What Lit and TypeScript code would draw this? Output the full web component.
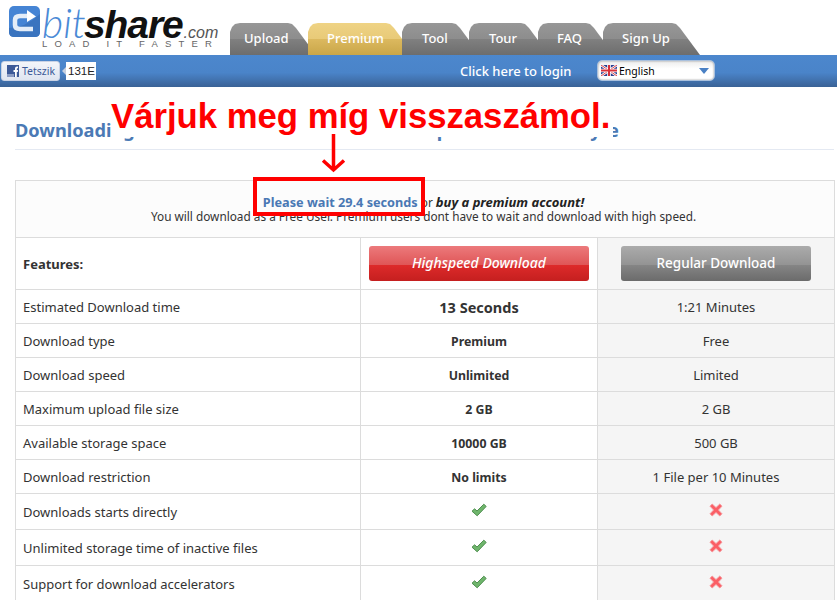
import { LitElement, html, css } from "lit";
import { customElement } from "lit/decorators.js";

const rows: [string, string, string, boolean?][] = [
  ["Estimated Download time", "13 Seconds", "1:21 Minutes", true],
  ["Download type", "Premium", "Free"],
  ["Download speed", "Unlimited", "Limited"],
  ["Maximum upload file size", "2 GB", "2 GB"],
  ["Available storage space", "10000 GB", "500 GB"],
  ["Download restriction", "No limits", "1 File per 10 Minutes"],
];
const ticks = ["Downloads starts directly", "Unlimited storage time of inactive files", "Support for download accelerators"];
const tabs: [string, number, number, number, boolean?][] = [
  ["Upload", 86, 14, -8],
  ["Premium", 106, 19, -12, true],
  ["Tool", 78, 20, -11],
  ["Tour", 80, 20, -11],
  ["FAQ", 76, 19, -11],
  ["Sign Up", 97, 19, 0],
];

const check = html`<svg class="ico" width="16" height="14" viewBox="0 0 16 14"><path d="M1 8.2 L3.6 5.8 L6 8 L12.8 1.2 L15.2 3.4 L6.2 12.8 Z" fill="#6fb56c" stroke="#4f8f50" stroke-width="1"/></svg>`;
const cross = html`<svg class="ico" width="14" height="14" viewBox="0 0 14 14"><path d="M3.2 1 L7 4.6 L10.8 1 L13 3.2 L9.4 7 L13 10.8 L10.8 13 L7 9.4 L3.2 13 L1 10.8 L4.6 7 L1 3.2 Z" fill="#fb5f66" stroke="#f59a9e" stroke-width="1"/></svg>`;

@customElement("app-root")
export class AppRoot extends LitElement {
  static styles = css`
    :host { display: block; position: relative; width: 837px; height: 600px; overflow: hidden; background: #fff; font-family: "Noto Sans", sans-serif; color: #333; }
    .top { display: flex; height: 55px; }
    .logo { width: 230px; flex: none; padding: 6px 0 0 9px; box-sizing: border-box; display: flex; gap: 2px; }
    .mark { flex: none; }
    .brand { display: flex; flex-direction: column; }
    .word { display: flex; align-items: baseline; height: 33px; line-height: 33px; white-space: nowrap; }
    .bit { font: italic 300 41px/33px Lato, sans-serif; color: #4a8ad6; width: 42px; }
    .share { font: italic 700 39px/33px "Liberation Sans", sans-serif; color: #111; letter-spacing: -1.1px; }
    .com { font: italic 400 16px/33px "Liberation Sans", sans-serif; color: #555; margin-left: 1px; }
    .tag { font: 400 9.5px/10px "Liberation Sans", sans-serif; letter-spacing: 7.2px; color: #666; white-space: nowrap; }
    .tabs { display: flex; align-items: flex-end; height: 55px; }
    .tab { height: 32px; box-sizing: border-box; padding-top: 6px; font-size: 13px; font-weight: 500; line-height: 18px; color: #fff; background: linear-gradient(#979797, #8d8d8d 50%, #808080 50%, #6d6d6d); clip-path: polygon(0 100%, 0 9px, 2px 4px, 5px 1px, 10px 0, calc(100% - 28px) 0, calc(100% - 24px) 1px, calc(100% - 20px) 5px, 100% 100%); white-space: nowrap; }
    .tab.gold { background: linear-gradient(#efd384, #e8ca78 50%, #dcb95f 50%, #c9a649); }
    .bar { height: 32px; display: flex; align-items: center; background: linear-gradient(#4c87cd, #4a84c9 55%, #3a6296); }
    .fb { width: 59px; height: 20px; margin-left: 1px; box-sizing: border-box; border-radius: 3px; background: linear-gradient(#f3f5fa, #dfe5f1); border: 1px solid #c9d2e4; display: flex; align-items: center; gap: 3px; padding-left: 5px; font: 400 10.5px "Noto Sans", sans-serif; color: #3b5998; }
    .count { width: 30px; height: 18px; margin-left: 6px; background: #fff; font: 400 11.5px/18px "Liberation Sans", sans-serif; color: #222; box-sizing: border-box; padding-left: 2px; position: relative; }
    .count::before { content: ""; position: absolute; left: -4px; top: 5px; border: 4px solid transparent; border-left: 0; border-right-color: #c6cfdf; }
    .login { margin-left: 364px; width: 137px; font-size: 13px; font-weight: 500; color: #fff; white-space: nowrap; }
    .sel { width: 118px; height: 21px; box-sizing: border-box; border-radius: 5px; background: linear-gradient(#ececec, #fff 40%); border: 1px solid #a9c0dd; box-shadow: inset 0 0 2px #888; display: flex; align-items: center; gap: 2px; padding-left: 3px; font: 400 10.5px "Noto Sans", sans-serif; color: #000; margin-top: -1px; }
    .sel i { width: 0; height: 0; border: 5px solid transparent; border-top: 6px solid #4a80c4; border-bottom: 0; margin-left: auto; margin-right: 5px; }
    main { padding: 0 3px 0 15px; }
    h1 { margin: 0; height: 63px; box-sizing: border-box; padding-top: 32px; border-bottom: 1px solid #e4e9f2; font-size: 18.2px; line-height: 22px; font-weight: 700; color: #4b7ab5; white-space: nowrap; display: flex; }
    .f1 { margin-left: 302px; } .f2 { margin-left: 142px; } .f3 { margin-left: 7.5px; }
    table { margin-top: 30px; width: 819px; border-collapse: collapse; table-layout: fixed; font-size: 13px; }
    td { border: 1px solid #dcdcdc; padding: 1px 0 0; text-align: center; height: 33px; box-sizing: border-box; }
    td:first-child { text-align: left; padding-left: 7px; }
    td:nth-child(3) { background: #f5f5f5; border-top-color: #cfcfcf; }
    td.intro { height: 57px; background: #fcfcfc; text-align: center; padding: 14px 3px 0 0; vertical-align: top; line-height: 14px; font-size: 11.8px; }
    .wait { color: #4a78b4; font-weight: 700; font-size: 12.7px; }
    .buy { font-weight: 700; font-style: italic; color: #222; font-size: 13px; }
    tr.row td { height: 34px; }
    tr.head td { height: 52px; padding-top: 0; padding-bottom: 0; }
    tr.tk td { height: 36px; }
    td.feat { font-weight: 700; font-size: 13px; padding-top: 1px; }
    .b { font-weight: 700; font-size: 12.3px; }
    td.big { font-size: 14.5px; }
    .btn { display: block; margin: 0 auto; height: 35px; box-sizing: border-box; border-radius: 3px; color: #fff; line-height: 34px; font-size: 13.5px; font-weight: 500; }
    .red { width: 220px; font-style: italic; font-size: 14px; background: linear-gradient(#ec7a7c, #df5556 55%, #dd2a2a 55%, #c51f1f); }
    .gray { width: 190px; background: linear-gradient(#ababab, #939393 55%, #858585 55%, #6b6b6b); }
    .ico { display: block; margin: -5px auto 0; }
    .mask { position: absolute; left: 111px; top: 105px; width: 502px; height: 32px; background: #fff; }
    .note { position: absolute; left: 111px; top: 95px; font: 700 34.7px/42px "Liberation Sans", sans-serif; color: #f00; white-space: nowrap; }
    .arrow { position: absolute; left: 320px; top: 133px; }
    .box { position: absolute; left: 253px; top: 177px; width: 172px; height: 39px; box-sizing: border-box; border: 4px solid #f00; }
  `;

  render() {
    return html`
      <div class="top">
        <div class="logo">
          <svg class="mark" width="31" height="31" viewBox="0 0 31 31">
            <rect width="31" height="31" rx="5" fill="#4584d4"/>
            <path d="M0 22 Q16 22 31 8 V26 Q31 31 26 31 H5 Q0 31 0 26Z" fill="#3a74bf"/>
            <path d="M20 10 H11 Q6 10 6 14 V19 Q6 23 11 23 H24" fill="none" stroke="#e4edf8" stroke-width="4.5"/>
            <path d="M18 4 L27 10.5 L18 16Z" fill="#fff"/>
          </svg>
          <div class="brand">
            <div class="word"><span class="bit">bit</span><span class="share">share</span><span class="com">.com</span></div>
            <div class="tag">LOAD IT FASTER</div>
          </div>
        </div>
        <nav class="tabs">
          ${tabs.map(([t, w, p, m, gold]) => html`<div class="tab ${gold ? "gold" : ""}" style="width:${w}px;padding-left:${p}px;margin-right:${m}px">${t}</div>`)}
        </nav>
      </div>
      <div class="bar">
        <div class="fb">
          <svg width="12" height="12" viewBox="0 0 12 12"><rect width="12" height="12" fill="#3b5998"/><rect y="9" width="7" height="3" fill="#8a9cc4"/><path d="M8 12 V7 H6.5 V5 H8 V3.5 Q8 1.5 10 1.5 H11 V3.3 H10.3 Q9.8 3.3 9.8 3.9 V5 H11 L10.8 7 H9.8 V12Z" fill="#fff"/></svg>
          Tetszik
        </div>
        <div class="count">131E</div>
        <div class="login">Click here to login</div>
        <div class="sel">
          <svg width="16" height="11" viewBox="0 0 16 11"><rect width="16" height="11" fill="#2b3f8f"/><path d="M0 0 L16 11 M16 0 L0 11" stroke="#fff" stroke-width="2.4"/><path d="M0 0 L16 11 M16 0 L0 11" stroke="#d8404a" stroke-width="1"/><path d="M8 0 V11 M0 5.5 H16" stroke="#fff" stroke-width="3.6"/><path d="M8 0 V11 M0 5.5 H16" stroke="#d8303a" stroke-width="2"/></svg>
          English<i></i>
        </div>
      </div>
      <main>
        <h1><span>Downloading</span><span class="f1">p</span><span class="f2">y</span><span class="f3">e</span></h1>
        <table>
          <colgroup><col style="width:345px"><col style="width:237px"><col style="width:237px"></colgroup>
          <tr><td class="intro" colspan="3">
            <span class="wait">Please wait 29.4 seconds</span> or <span class="buy">buy a premium account!</span><br>
            You will download as a Free User. Premium users dont have to wait and download with high speed.
          </td></tr>
          <tr class="head">
            <td class="feat">Features:</td>
            <td><span class="btn red">Highspeed Download</span></td>
            <td><span class="btn gray">Regular Download</span></td>
          </tr>
          ${rows.map(([a, b, c, big]) => html`<tr class="row"><td>${a}</td><td class="b ${big ? "big" : ""}">${b}</td><td>${c}</td></tr>`)}
          ${ticks.map((t) => html`<tr class="tk"><td>${t}</td><td>${check}</td><td>${cross}</td></tr>`)}
        </table>
      </main>
      <div class="mask"></div>
      <div class="note">Várjuk meg míg visszaszámol.</div>
      <svg class="arrow" width="28" height="40" viewBox="0 0 28 40"><path d="M13.5 1 V37 M3 27.5 L13.5 37 L24 27.5" fill="none" stroke="#f00" stroke-width="3.5"/></svg>
      <div class="box"></div>
    `;
  }
}
